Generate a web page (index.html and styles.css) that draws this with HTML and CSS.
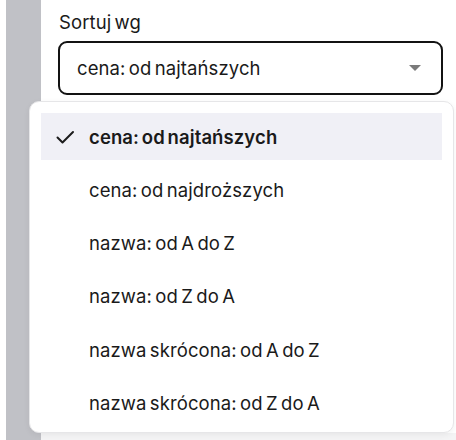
FILE: index.html
```html
<!DOCTYPE html>
<html lang="pl">
<head>
<meta charset="utf-8">
<link rel="stylesheet" href="styles.css">
</head>
<body>
<div class="page">
  <div class="strip"></div>
  <div class="main">
    <div class="panel">
      <div class="label">Sortuj wg</div>
      <div class="select">
        <span class="value">cena: od najtańszych</span>
        <span class="arrow"></span>
      </div>
    </div>
    <div class="footer"></div>
  </div>
  <ul class="menu">
    <li class="item selected">
      <svg class="check" viewBox="0 0 24 24" width="24" height="24"><path d="M4.5 12.5l5 5L20 7" fill="none" stroke="#1c1c1c" stroke-width="2" stroke-linecap="round" stroke-linejoin="round"/></svg>
      <span>cena: od najtańszych</span>
    </li>
    <li class="item"><span>cena: od najdroższych</span></li>
    <li class="item"><span>nazwa: od A do Z</span></li>
    <li class="item"><span>nazwa: od Z do A</span></li>
    <li class="item"><span>nazwa skrócona: od A do Z</span></li>
    <li class="item"><span>nazwa skrócona: od Z do A</span></li>
  </ul>
</div>
</body>
</html>
```
FILE: styles.css
```css
* { box-sizing: border-box; }
html, body { margin: 0; padding: 0; background: #ffffff; }
body {
  font-family: "Inter", "Liberation Sans", sans-serif;
  color: #1a1a1a;
  width: 456px;
  height: 440px;
  overflow: hidden;
}
.page {
  position: relative;
  display: flex;
  height: 440px;
  padding-left: 6px;
}
.strip {
  width: 35px;
  background: #c0c1c6;
  flex: none;
}
.main {
  flex: 1;
  display: flex;
  flex-direction: column;
}
.panel {
  flex: 1;
  padding: 9px 13px 0 17px;
}
.label {
  font-size: 18.5px;
  letter-spacing: 0.1px;
  word-spacing: -2px;
  line-height: 26px;
  height: 26px;
  padding-left: 1px;
  margin-bottom: 6px;
}
.select {
  height: 54px;
  border: 2px solid #131313;
  border-radius: 9px;
  display: flex;
  align-items: center;
  justify-content: space-between;
  padding: 0 20px 0 17px;
  font-size: 18.5px;
  letter-spacing: 0.1px;
  word-spacing: -2px;
}
.arrow {
  width: 0;
  height: 0;
  border-left: 6px solid transparent;
  border-right: 6px solid transparent;
  border-top: 6px solid #7a7a7a;
}
.footer {
  height: 7px;
  background: #f4f4f5;
}
.menu {
  position: absolute;
  left: 29px;
  top: 101px;
  width: 425px;
  height: 332px;
  margin: 0;
  padding: 11px 11px 0 11px;
  list-style: none;
  background: #ffffff;
  border: 1px solid #e6e6e8;
  border-radius: 10px;
  box-shadow: 0 2px 6px rgba(0,0,0,0.06);
  display: flex;
  flex-direction: column;
  gap: 6.3px;
}
.item {
  height: 47px;
  display: flex;
  align-items: center;
  padding-left: 48px;
  font-size: 18.5px;
  letter-spacing: 0.1px;
  word-spacing: -2px;
}
.item.selected {
  background: #f0f0f6;
  font-weight: 600;
  padding-left: 12px;
}
.check {
  margin-right: 12px;
  flex: none;
}
```
